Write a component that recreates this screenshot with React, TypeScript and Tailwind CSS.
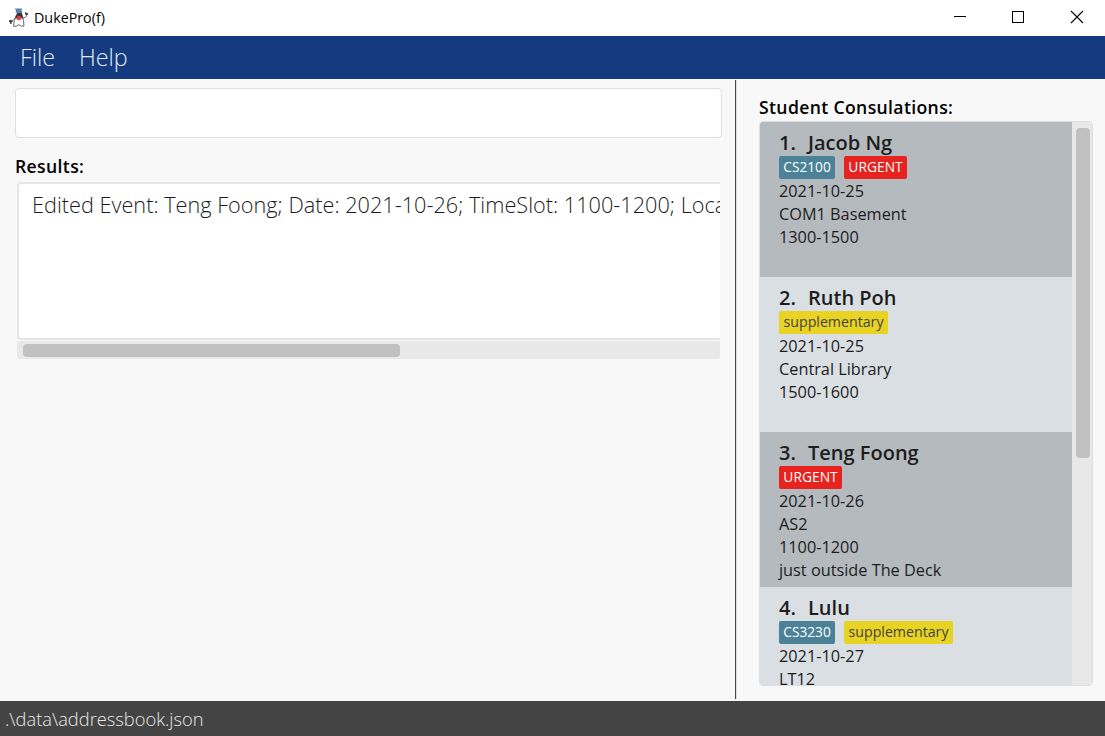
import React from "react";

type Tag = { label: string; kind: "module" | "urgent" | "extra" };
type Consultation = { name: string; tags: Tag[]; lines: string[] };

const consultations: Consultation[] = [
  {
    name: "Jacob Ng",
    tags: [
      { label: "CS2100", kind: "module" },
      { label: "URGENT", kind: "urgent" },
    ],
    lines: ["2021-10-25", "COM1 Basement", "1300-1500"],
  },
  {
    name: "Ruth Poh",
    tags: [{ label: "supplementary", kind: "extra" }],
    lines: ["2021-10-25", "Central Library", "1500-1600"],
  },
  {
    name: "Teng Foong",
    tags: [{ label: "URGENT", kind: "urgent" }],
    lines: ["2021-10-26", "AS2", "1100-1200", "just outside The Deck"],
  },
  {
    name: "Lulu",
    tags: [
      { label: "CS3230", kind: "module" },
      { label: "supplementary", kind: "extra" },
    ],
    lines: ["2021-10-27", "LT12"],
  },
];

const tagStyle = {
  module: "w-[56px] bg-[#4b8297] text-white text-[13.7px]",
  urgent: "w-[63px] bg-[#e6231e] text-white text-[13.8px]",
  extra: "w-[109px] bg-[#e8d222] text-[#444444] text-[14.2px]",
};

function Duke() {
  return (
    <svg width="22" height="22" viewBox="0 0 22 22" className="shrink-0">
      <path d="M8 8.5 Q5.8 13 5.6 19.3 Q8 20 10.5 17.8 Q13.5 19.8 16 19 Q16.2 13 13.5 8.5Z" fill="#fff" stroke="#555" strokeWidth="0.9" />
      <path d="M9 5.8 Q11.5 4.6 13.8 5.8 L15.6 12 Q11 9 7 12.5Z" fill="#3a3335" />
      <path d="M6.6 1.4 L14 1.4 L13.5 3.5 L14.7 5.7 L7.6 5.7 L8 3.2Z" fill="#5682b0" />
      <circle cx="11" cy="11" r="2.3" fill="#e33a3e" />
      <path d="M6.5 12.2 L3.5 14.5 M15 11.2 L18.4 9.6 L18.4 7" fill="none" stroke="#777" strokeWidth="1" />
      <path d="M1 14.3 L4.5 14.3 M2.5 12.8 L3 16.8 M17.3 5.3 L18.5 7.5 L20 6.3" fill="none" stroke="#333" strokeWidth="1.5" />
    </svg>
  );
}

function Card({ item, index }: { item: Consultation; index: number }) {
  return (
    <div className={`h-[155px] shrink-0 pt-[7px] pl-[19px] text-[#1d1d1d] ${index % 2 === 0 ? "bg-[#b4babe]" : "bg-[#dadfe3]"}`}>
      <div className="flex h-[27px] items-center text-[20px] leading-[27px] font-semibold">
        <span className="w-[29px]">{index + 1}.</span>
        <span>{item.name}</span>
      </div>
      <div className="mb-px flex h-[23px] gap-[9px]">
        {item.tags.map((tag) => (
          <span key={tag.label} className={`h-[23px] rounded-[2px] text-center leading-[22px] font-medium whitespace-nowrap ${tagStyle[tag.kind]}`}>
            {tag.label}
          </span>
        ))}
      </div>
      {item.lines.map((line) => (
        <div key={line} className="h-[23px] text-[16.3px] leading-[23px] whitespace-nowrap">
          {line}
        </div>
      ))}
    </div>
  );
}

export default function App() {
  return (
    <div className="flex h-[736px] w-[1105px] flex-col overflow-hidden bg-[#f8f8f8] font-['Open_Sans','Noto_Sans',sans-serif]">
      <header className="flex h-[36px] shrink-0 items-center bg-white pl-[8px]">
        <Duke />
        <span className="ml-[4px] flex-1 text-[14.3px] text-black">DukePro(f)</span>
        <svg width="151" height="36" viewBox="0 0 151 36" fill="none" stroke="#000" shapeRendering="crispEdges">
          <path d="M0 16.5H12" />
          <path d="M58.5 11.5H69.5V22.5H58.5Z" />
          <path d="M117 11L129 23M129 11L117 23" shapeRendering="auto" strokeWidth="1.1" />
        </svg>
      </header>
      <nav className="flex h-[43px] shrink-0 items-center gap-[24px] bg-[#143b80] pl-[20px] text-[23.3px] font-light text-[#e5e9f0]">
        <span>File</span>
        <span>Help</span>
      </nav>
      <main className="flex h-[622px] shrink-0">
        <section className="flex w-[735px] flex-col pt-[9px] pl-[15px]">
          <input className="h-[50px] w-[707px] shrink-0 rounded-[4px] border border-[#e0e0e0] bg-white outline-none" />
          <h2 className="mt-[15px] h-[29px] text-[17.6px] leading-[26px] font-semibold tracking-[0.36px] text-black">Results:</h2>
          <div className="ml-[2px] h-[158px] w-[703px] shrink-0 overflow-hidden rounded-l-[4px] border-2 border-r-0 border-[#e5e5e5] bg-white pt-[5px] pl-[13px] text-[21.7px] leading-[32px] font-light whitespace-nowrap text-[#1c1c1c]">
            Edited Event: Teng Foong; Date: 2021-10-26; TimeSlot: 1100-1200; Location: COM1 Basement
          </div>
          <div className="mt-px ml-[2px] flex h-[18px] w-[703px] items-center rounded-[2px] bg-[#e8e8e8] pl-[6px]">
            <div className="h-[13px] w-[377px] rounded-[4px] bg-[#c1c1c1]" />
          </div>
        </section>
        <div className="mt-px h-[619px] w-[2px] shrink-0 border-r border-l border-l-[#474747] border-r-[#dddddd]" />
        <aside className="flex flex-1 flex-col pt-[15px] pl-[22px]">
          <h2 className="h-[27px] text-[17.6px] leading-[27px] font-semibold tracking-[0.36px] text-black">Student Consulations:</h2>
          <div className="flex h-[565px] w-[334px] overflow-hidden rounded-[4px] border border-[#dcdfe1]">
            <div className="flex h-[563px] w-[312px] shrink-0 flex-col overflow-hidden">
              {consultations.map((item, i) => (
                <Card key={item.name} item={item} index={i} />
              ))}
            </div>
            <div className="flex-1 bg-[#e8e8e8] pt-[6px] pl-[4px]">
              <div className="h-[330px] w-[14px] rounded-[4px] bg-[#c1c1c1]" />
            </div>
          </div>
        </aside>
      </main>
      <footer className="flex h-[35px] shrink-0 items-center bg-[#444444] pl-[5px] text-[18.3px] leading-[35px] font-light text-[#e8e8e8]">.\data\addressbook.json</footer>
    </div>
  );
}
